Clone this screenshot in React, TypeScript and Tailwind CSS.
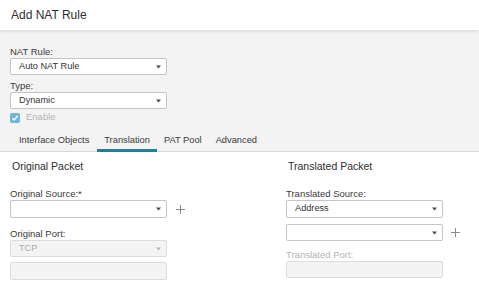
import React from 'react';

const font = { fontFamily: '"Liberation Sans", Arial, sans-serif' };

function Caret({ muted = false }: { muted?: boolean }) {
  return (
    <svg width="5" height="4" viewBox="0 0 5 4" className="shrink-0">
      <path d="M0 0.5 H5 L2.5 3.5 Z" fill={muted ? '#b8b8b8' : '#4a4a4a'} />
    </svg>
  );
}

function Plus() {
  return (
    <svg width="9" height="9" viewBox="0 0 9 9" className="shrink-0">
      <path d="M4.5 0 V9 M0 4.5 H9" stroke="#8a8a8a" strokeWidth="1" />
    </svg>
  );
}

function Label({ children, muted = false }: { children: React.ReactNode; muted?: boolean }) {
  return (
    <div className={`h-[11px] text-[9.5px] leading-[11px] mb-px ${muted ? 'text-[#b5b5b5]' : 'text-[#3a3a3a]'}`}>
      {children}
    </div>
  );
}

function Select({
  value,
  h = 'h-[17px]',
  disabled = false,
}: {
  value?: string;
  h?: string;
  disabled?: boolean;
}) {
  return (
    <div
      className={`w-[157px] ${h} flex items-center justify-between pl-[8px] pr-[5px] rounded-[2px] border ${
        disabled ? 'bg-[#f4f4f4] border-[#dcdcdc] text-[#a8a8a8]' : 'bg-white border-[#c4c4c4] text-[#333]'
      } text-[9.2px] leading-none`}
    >
      <span>{value ?? ''}</span>
      <Caret muted={disabled} />
    </div>
  );
}

function Field({ h = 'h-[18px]' }: { h?: string }) {
  return <div className={`w-[157px] ${h} rounded-[2px] border border-[#dcdcdc] bg-[#f4f4f4]`} />;
}

const tabs = ['Interface Objects', 'Translation', 'PAT Pool', 'Advanced'];

export default function App() {
  return (
    <div className="w-[479px] h-[290px] overflow-hidden bg-white text-[#333]" style={font}>
      {/* header */}
      <div className="relative z-10 h-[30px] bg-white shadow-[0_1px_4px_rgba(0,0,0,0.12)] pl-[11px] text-[12px] leading-[30px] text-[#2e2e2e]">
        Add NAT Rule
      </div>

      {/* general settings */}
      <div className="bg-[#f3f3f3] pt-[16px]">
        <div className="pl-[10px]">
          <Label>NAT Rule:</Label>
          <Select value="Auto NAT Rule" />
          <div className="mt-[5px]">
            <Label>Type:</Label>
            <Select value="Dynamic" />
          </div>
          <div className="mt-[3px] h-[11px] flex items-center gap-[6px]">
            <div className="w-[10px] h-[10px] rounded-[2px] bg-[#6fb5da] flex items-center justify-center">
              <svg width="8" height="8" viewBox="0 0 8 8">
                <path d="M1.3 4.2 L3.2 6 L6.8 1.8" stroke="white" strokeWidth="1.4" fill="none" />
              </svg>
            </div>
            <span className="text-[9.5px] text-[#b3b3b3]">Enable</span>
          </div>
        </div>

        <div className="flex pl-[12px] border-b border-[#d8d8d8]">
          {tabs.map((t) => (
            <div
              key={t}
              className={`-mb-px px-[7px] pt-[11px] pb-[3px] border-b-[3px] text-[9.3px] leading-[12px] text-[#3a3a3a] ${
                t === 'Translation' ? 'border-[#1f7ea6]' : 'border-transparent'
              } ${t === 'Interface Objects' ? 'mr-[1px]' : ''}`}
            >
              {t}
            </div>
          ))}
        </div>
      </div>

      {/* translation */}
      <div className="flex pt-[8px]">
        <div className="w-[286px] pl-[10px]">
          <div className="pl-[2px] text-[10.5px] leading-[13px] text-[#2e2e2e]">Original Packet</div>
          <div className="mt-[15px]">
            <Label>Original Source:*</Label>
            <div className="flex items-center gap-[9px]">
              <Select h="h-[18px]" />
              <Plus />
            </div>
          </div>
          <div className="mt-[10px]">
            <Label>Original Port:</Label>
            <Select value="TCP" disabled />
          </div>
          <div className="mt-[5px]">
            <Field />
          </div>
        </div>

        <div className="flex-1">
          <div className="pl-[2px] text-[10.5px] leading-[13px] text-[#2e2e2e]">Translated Packet</div>
          <div className="mt-[15px]">
            <Label>Translated Source:</Label>
            <Select value="Address" h="h-[18px]" />
            <div className="mt-[6px] flex items-center gap-[8px]">
              <Select />
              <Plus />
            </div>
          </div>
          <div className="mt-[8px]">
            <Label muted>Translated Port:</Label>
            <Field h="h-[17px]" />
          </div>
        </div>
      </div>
    </div>
  );
}
